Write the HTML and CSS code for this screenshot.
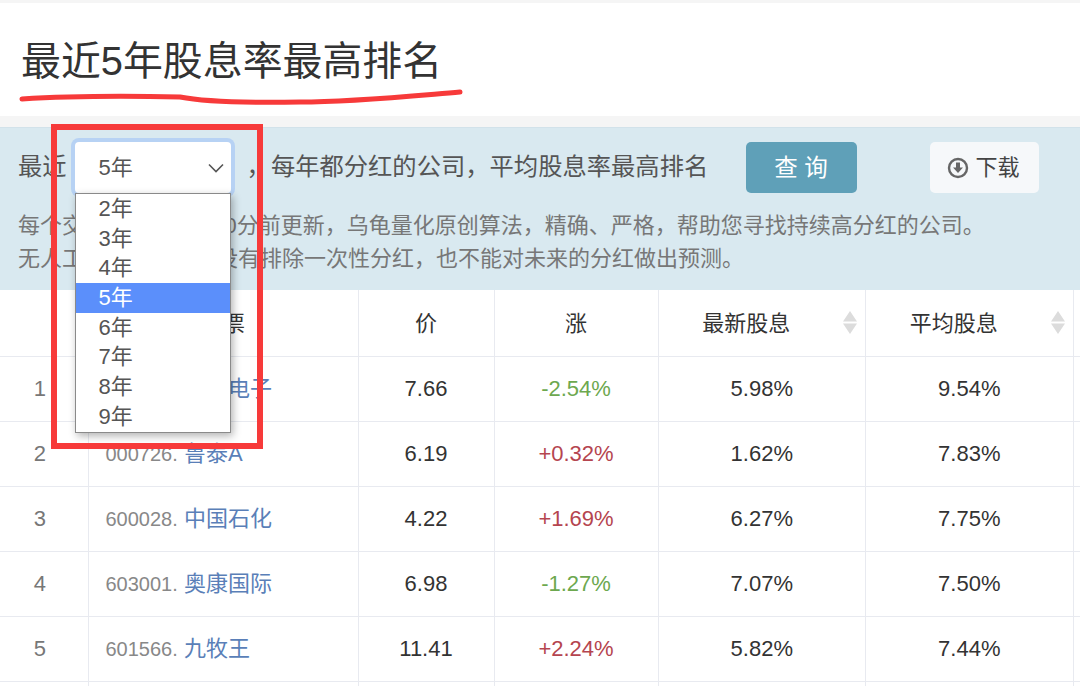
FILE: index.html

```html
<!DOCTYPE html>
<html lang="zh-CN">
<head>
  <meta charset="UTF-8">
  <title>最近5年股息率最高排名</title>
  <link rel="stylesheet" href="styles.css">
</head>
<body>
  <div class="title-box">
    <h1>最近5年股息率最高排名</h1>
  </div>

  <div class="query-panel">
    <div class="query-row">
      <span class="query-label">最近</span>
      <div class="year-select">
        <span class="year-value">5年</span>
        <svg class="chevron" width="16" height="10" viewBox="0 0 16 10"><path d="M1 1.5 L8 8.5 L15 1.5" fill="none" stroke="#555" stroke-width="1.6"/></svg>
        <ul class="year-menu">
          <li>2年</li>
          <li>3年</li>
          <li>4年</li>
          <li class="active">5年</li>
          <li>6年</li>
          <li>7年</li>
          <li>8年</li>
          <li>9年</li>
        </ul>
      </div>
      <span class="query-text">，每年都分红的公司，平均股息率最高排名</span>
      <button class="btn-query">查 询</button>
      <button class="btn-download">
        <svg width="22" height="22" viewBox="0 0 22 22"><circle cx="11" cy="11" r="9" fill="none" stroke="#666" stroke-width="2.4"/><path d="M9 5.5 H13 V10.5 H16 L11 16 L6 10.5 H9 Z" fill="#666"/></svg>
        <span class="download-text">下载</span>
      </button>
    </div>
    <p class="query-note">每个交易日的晚上8:30分前更新，乌龟量化原创算法，精确、严格，帮助您寻找持续高分红的公司。<br>无人工干预，但我们没有排除一次性分红，也不能对未来的分红做出预测。</p>
  </div>

  <table class="rank-table">
    <colgroup>
      <col class="col-rank">
      <col class="col-stock">
      <col class="col-price">
      <col class="col-change">
      <col class="col-rate">
      <col class="col-rate">
      <col>
    </colgroup>
    <thead>
      <tr>
        <th></th>
        <th>股票</th>
        <th>价</th>
        <th>涨</th>
        <th class="sortable">最新股息
          <svg class="sort" width="14" height="23" viewBox="0 0 14 23"><path d="M7 0 L14 10.5 H0 Z M0 12.5 H14 L7 23 Z" fill="#dcdcdc"/></svg>
        </th>
        <th class="sortable">平均股息
          <svg class="sort" width="14" height="23" viewBox="0 0 14 23"><path d="M7 0 L14 10.5 H0 Z M0 12.5 H14 L7 23 Z" fill="#dcdcdc"/></svg>
        </th>
        <th></th>
      </tr>
    </thead>
    <tbody>
      <tr>
        <td class="rank">1</td>
        <td class="stock"><span class="code">688183.</span> <a>生益电子</a></td>
        <td class="price">7.66</td>
        <td class="down">-2.54%</td>
        <td class="rate">5.98%</td>
        <td class="rate">9.54%</td>
        <td></td>
      </tr>
      <tr>
        <td class="rank">2</td>
        <td class="stock"><span class="code">000726.</span> <a>鲁泰A</a></td>
        <td class="price">6.19</td>
        <td class="up">+0.32%</td>
        <td class="rate">1.62%</td>
        <td class="rate">7.83%</td>
        <td></td>
      </tr>
      <tr>
        <td class="rank">3</td>
        <td class="stock"><span class="code">600028.</span> <a>中国石化</a></td>
        <td class="price">4.22</td>
        <td class="up">+1.69%</td>
        <td class="rate">6.27%</td>
        <td class="rate">7.75%</td>
        <td></td>
      </tr>
      <tr>
        <td class="rank">4</td>
        <td class="stock"><span class="code">603001.</span> <a>奥康国际</a></td>
        <td class="price">6.98</td>
        <td class="down">-1.27%</td>
        <td class="rate">7.07%</td>
        <td class="rate">7.50%</td>
        <td></td>
      </tr>
      <tr>
        <td class="rank">5</td>
        <td class="stock"><span class="code">601566.</span> <a>九牧王</a></td>
        <td class="price">11.41</td>
        <td class="up">+2.24%</td>
        <td class="rate">5.82%</td>
        <td class="rate">7.44%</td>
        <td></td>
      </tr>
      <tr class="cut-row">
        <td></td><td></td><td></td><td></td><td></td><td></td><td></td>
      </tr>
    </tbody>
  </table>

  <!-- red pen marks on top of the screenshot -->
  <svg class="pen-line" width="480" height="20" viewBox="0 0 480 20"><path d="M22 10 C70 7 130 7 180 8 C200 12 240 14 300 13 C350 13 400 8 460 3" fill="none" stroke="#f73a3a" stroke-width="5" stroke-linecap="round"/></svg>
  <div class="pen-box"></div>
</body>
</html>
```

FILE: styles.css

```css
body {
  margin: 0;
  height: 686px;
  overflow: hidden;
  position: relative;
  background: #f5f5f5;
  padding-top: 3px;
  box-sizing: border-box;
  font-family: "Liberation Sans", "Noto Sans CJK SC", sans-serif;
  color: #333;
}
.title-box {
  background: #fff;
  height: 113px;
  padding-left: 21px;
  display: flex;
  align-items: center;
}
h1 {
  margin: 0 0 4px;
  font-size: 39.9px;
  font-weight: 400;
  color: #333;
}
.query-panel {
  margin-top: 11px;
  height: 148px;
  padding: 14px 0 0 18px;
  background: #d9e9f0;
  border-top: 1px solid #d2e2ea;
  color: #555;
}
.query-row {
  display: flex;
  align-items: center;
  height: 51px;
  font-size: 24.3px;
}
.query-label,
.query-text,
.year-value,
.download-text {
  padding-bottom: 6px;
}
.year-select {
  position: relative;
  box-sizing: border-box;
  width: 156px;
  height: 51px;
  margin-left: 8px;
  padding-left: 24px;
  display: flex;
  align-items: center;
  justify-content: space-between;
  background: #fff;
  border-radius: 4px;
  box-shadow: 0 0 0 4px #b7d2f4;
  font-size: 22px;
}
.chevron {
  margin-right: 7px;
}
.year-menu {
  position: absolute;
  top: 51px;
  left: 0;
  width: 156px;
  box-sizing: border-box;
  margin: 0;
  padding: 0;
  list-style: none;
  background: #fff;
  border: 1px solid #8a8a8a;
  box-shadow: 2px 3px 8px rgba(0, 0, 0, 0.3);
  z-index: 5;
}
.year-menu li {
  height: 29.7px;
  line-height: 29.7px;
  padding-left: 23px;
}
.year-menu .active {
  background: #5b8ffb;
  color: #fff;
}
.query-text {
  margin-left: 16px;
  width: 460px;
  white-space: nowrap;
}
.btn-query {
  width: 111px;
  height: 51px;
  margin-left: 39px;
  padding: 0 0 4px;
  border: none;
  border-radius: 5px;
  background: #5fa0b8;
  color: #fff;
  font: inherit;
  font-size: 23.5px;
}
.btn-download {
  width: 109px;
  height: 51px;
  margin-left: 73px;
  padding: 0 2px 0 0;
  border: none;
  border-radius: 5px;
  background: #f6f8fa;
  color: #444;
  font: inherit;
  font-size: 22px;
  display: flex;
  align-items: center;
  justify-content: center;
  gap: 7px;
}
.query-note {
  margin: 16px 0 0;
  font-size: 22px;
  line-height: 33px;
  color: #777;
  white-space: nowrap;
}
.rank-table {
  table-layout: fixed;
  width: 1080px;
  border-collapse: collapse;
  background: #fff;
  font-size: 22px;
}
.col-rank { width: 88px; }
.col-stock { width: 270px; }
.col-price { width: 136px; }
.col-change { width: 164px; }
.col-rate { width: 207.5px; }
.rank-table th,
.rank-table td {
  box-sizing: border-box;
  border: 1px solid #e8eaf0;
  border-top: none;
  padding: 0;
  text-align: center;
  height: 65px;
  color: #333;
  font-weight: 400;
}
.rank-table th {
  height: 66px;
  padding: 0 0 4px;
  position: relative;
}
.rank-table th:first-child,
.rank-table td:first-child {
  border-left: none;
}
.rank-table th:last-child,
.rank-table td:last-child {
  border-right: none;
}
.rank-table .sortable {
  padding-right: 31px;
}
.sort {
  position: absolute;
  right: 8px;
  top: 21px;
}
.rank-table .rank {
  color: #777;
  padding-right: 8px;
}
.rank-table .stock {
  text-align: left;
  padding: 0 0 6px 17px;
}
.code {
  font-size: 20px;
  color: #888;
}
.stock a {
  color: #5a7fb8;
}
.rank-table .down {
  color: #6da84f;
}
.rank-table .up {
  color: #b5454f;
}
.rank-table .rate {
  text-align: right;
  padding-right: 72px;
}
.rank-table .cut-row td {
  height: 5px;
  padding: 0;
  border-bottom: none;
}
.pen-line {
  position: absolute;
  left: 0;
  top: 89px;
}
.pen-box {
  position: absolute;
  left: 51px;
  top: 124px;
  width: 212px;
  height: 325px;
  box-sizing: border-box;
  border: 6px solid #f73a3a;
  z-index: 6;
}
```
